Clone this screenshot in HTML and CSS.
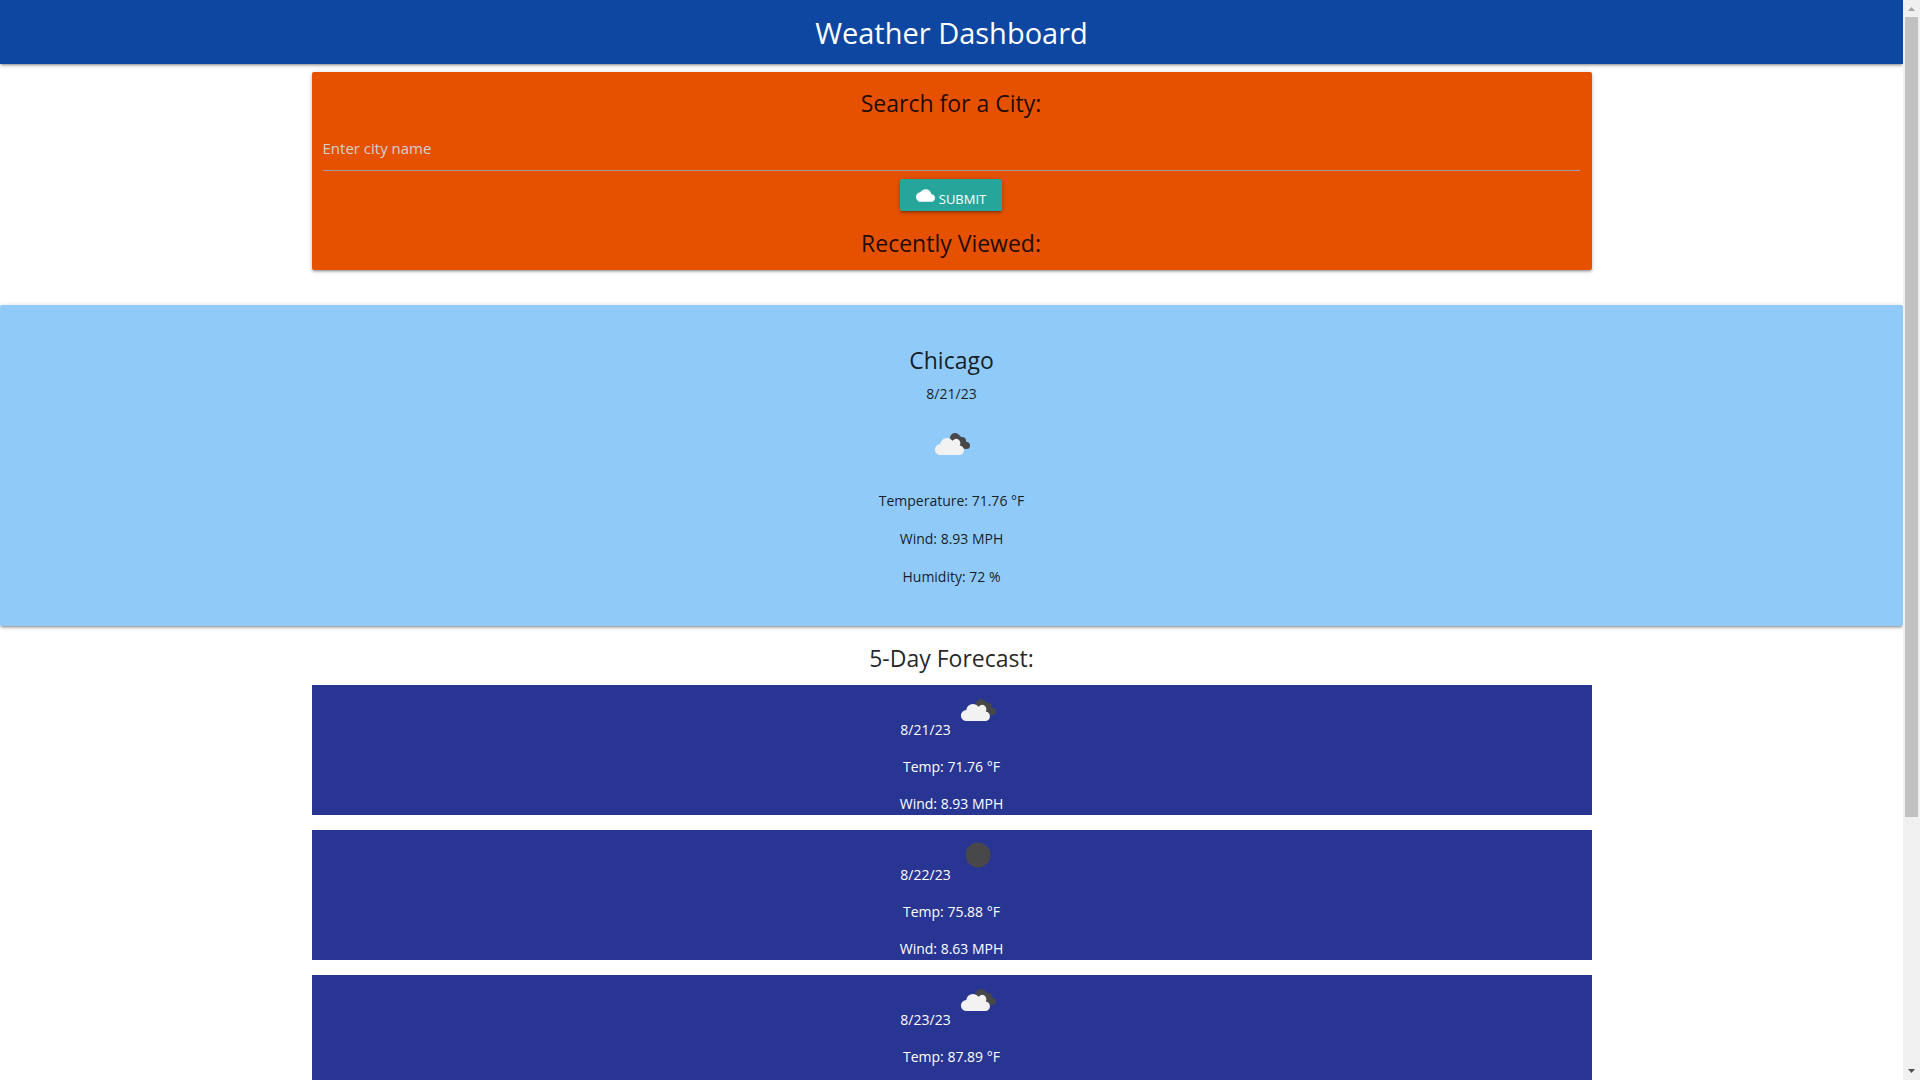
FILE: index.html
```html
<!DOCTYPE html>
<html lang="en">
<head>
<meta charset="utf-8">
<title>Weather Dashboard</title>
<link rel="stylesheet" href="styles.css">
</head>
<body>
<svg class="defs" aria-hidden="true">
  <symbol id="broken-clouds" viewBox="0 0 50 50">
    <g fill="#48484a">
      <circle cx="28" cy="19" r="5"/>
      <circle cx="35" cy="22" r="4"/>
      <circle cx="39.500" cy="26.500" r="3.500"/>
      <path d="M24 18l8-2 9 8-3 6-6-3z"/>
    </g>
    <path fill="#f2f2f2" d="M13.500 36a5.500 5.500 0 0 1-.2-11a6.800 6.800 0 0 1 12.200-3.200 4.200 4.200 0 0 1 7.200 4.600a4.900 4.900 0 0 1 .5 9.600z"/>
  </symbol>
  <symbol id="clear-night" viewBox="0 0 50 50">
    <circle cx="25" cy="25" r="12.500" fill="#48484a"/>
  </symbol>
</svg>
<div class="viewport">
  <div class="page">
    <header class="nav"><h1 class="nav-title">Weather Dashboard</h1></header>
    <main>
      <section class="container search">
        <form class="search-form">
          <h2 class="heading"><label for="city">Search for a City:</label></h2>
          <input class="city-input" id="city" type="text" placeholder="Enter city name">
          <button class="submit" type="button">
            <svg class="submit-icon" viewBox="0 4 24 16" aria-hidden="true"><path fill="#fff" d="M19.350 10.040C18.670 6.590 15.640 4 12 4 9.110 4 6.600 5.640 5.350 8.040 2.340 8.360 0 10.910 0 14c0 3.310 2.690 6 6 6h13c2.760 0 5-2.240 5-5 0-2.640-2.050-4.780-4.650-4.960z"/></svg>
            <span>SUBMIT</span>
          </button>
        </form>
        <h2 class="heading">Recently Viewed:</h2>
      </section>
      <section class="current">
        <h2 class="heading">Chicago</h2>
        <p>8/21/23</p>
        <svg class="weather-icon" role="img" aria-label="Broken clouds"><use href="#broken-clouds"/></svg>
        <div class="readings">
          <p>Temperature: 71.76 °F</p>
          <p>Wind: 8.93 MPH</p>
          <p>Humidity: 72 %</p>
        </div>
      </section>
      <section class="container forecast">
        <h2 class="heading">5-Day Forecast:</h2>
        <article class="day">
          <div class="day-top"><p>8/21/23</p><svg class="weather-icon" role="img" aria-label="Broken clouds"><use href="#broken-clouds"/></svg></div>
          <p>Temp: 71.76 °F</p>
          <p>Wind: 8.93 MPH</p>
        </article>
        <article class="day">
          <div class="day-top"><p>8/22/23</p><svg class="weather-icon" role="img" aria-label="Clear night"><use href="#clear-night"/></svg></div>
          <p>Temp: 75.88 °F</p>
          <p>Wind: 8.63 MPH</p>
        </article>
        <article class="day">
          <div class="day-top"><p>8/23/23</p><svg class="weather-icon" role="img" aria-label="Broken clouds"><use href="#broken-clouds"/></svg></div>
          <p>Temp: 87.89 °F</p>
        </article>
      </section>
    </main>
  </div>
  <div class="scrollbar" aria-hidden="true">
    <svg class="arrow" viewBox="0 0 17 17"><path fill="#a3a3a3" d="M5 11h7L8.500 7z"/></svg>
    <div class="track"><div class="thumb"></div></div>
    <svg class="arrow" viewBox="0 0 17 17"><path fill="#505050" d="M5 6h7L8.500 10z"/></svg>
  </div>
</div>
</body>
</html>
```
FILE: styles.css
```css
* { box-sizing: border-box; }

body {
  margin: 0;
  font-family: "Open Sans", "Noto Sans", sans-serif;
  font-size: 14px;
  line-height: 22px;
  color: rgba(0, 0, 0, 0.87);
  background: #fff;
}

h1, h2, p { margin: 0; }

.defs { display: none; }

.viewport {
  display: grid;
  grid-template-columns: 1fr 17px;
  height: 100vh;
  overflow: hidden;
}

.page { min-width: 0; overflow: hidden; }

.nav {
  display: flex;
  justify-content: center;
  background: #0d47a1;
  color: #fff;
}

.nav-title {
  padding-top: 2px;
  font-size: 29px;
  font-weight: 400;
  line-height: 62px;
}

.nav, .search, .current, .submit {
  box-shadow: 0 2px 2px 0 rgba(0, 0, 0, 0.14), 0 3px 1px -2px rgba(0, 0, 0, 0.12), 0 1px 5px 0 rgba(0, 0, 0, 0.2);
}

.container {
  width: 100%;
  max-width: 1280px;
  margin: 0 auto;
}

.heading {
  font-size: 23px;
  font-weight: 400;
  line-height: 28px;
  text-align: center;
}

.search {
  margin-top: 8px;
  padding: 17px 12px 13px 11px;
  border-radius: 2px;
  background: #e65100;
}

.search-form {
  display: flex;
  flex-direction: column;
  align-items: center;
  gap: 8px;
  margin-bottom: 18px;
}

.city-input {
  width: 100%;
  height: 46px;
  padding: 0;
  border: 0;
  border-bottom: 1px solid #9e9e9e;
  background: transparent;
  color: inherit;
  font: inherit;
  font-size: 15px;
  outline: none;
}

.city-input::placeholder { color: #d1d1d1; opacity: 1; }

.submit {
  display: flex;
  align-items: center;
  gap: 4px;
  height: 32px;
  padding: 0 16px;
  border: 0;
  border-radius: 2px;
  background: #26a69a;
  color: #fff;
  font: inherit;
  font-size: 13px;
  line-height: 16px;
}

.submit span { padding-top: 8px; }

.submit-icon { width: 19px; height: 13px; }

.current {
  display: flex;
  flex-direction: column;
  align-items: center;
  margin-top: 35px;
  padding: 41px 24px 38px;
  border-radius: 2px;
  background: #90caf9;
}

.current .heading { margin-bottom: 9px; }

.weather-icon { display: block; width: 50px; height: 50px; }

.current .weather-icon { margin: 14px 0 21px; }

.readings {
  display: flex;
  flex-direction: column;
  gap: 16px;
  text-align: center;
}

.forecast {
  display: flex;
  flex-direction: column;
  gap: 15px;
  padding-top: 18px;
}

.forecast .heading { margin-bottom: -2px; }

.day {
  display: flex;
  flex-direction: column;
  align-items: center;
  gap: 15px;
  min-height: 130px;
  background: #283593;
  color: #fff;
}

.day-top {
  display: flex;
  align-items: flex-end;
  gap: 2px;
  height: 56px;
}

.day-top .weather-icon { align-self: flex-start; }

.scrollbar {
  display: flex;
  flex-direction: column;
  background: #f0f0f0;
}

.arrow { display: block; width: 17px; height: 17px; }

.track {
  display: grid;
  grid-template-rows: 13fr 4fr;
  flex: 1;
  padding: 0 2px;
}

.thumb { background: #c1c1c1; }
```
